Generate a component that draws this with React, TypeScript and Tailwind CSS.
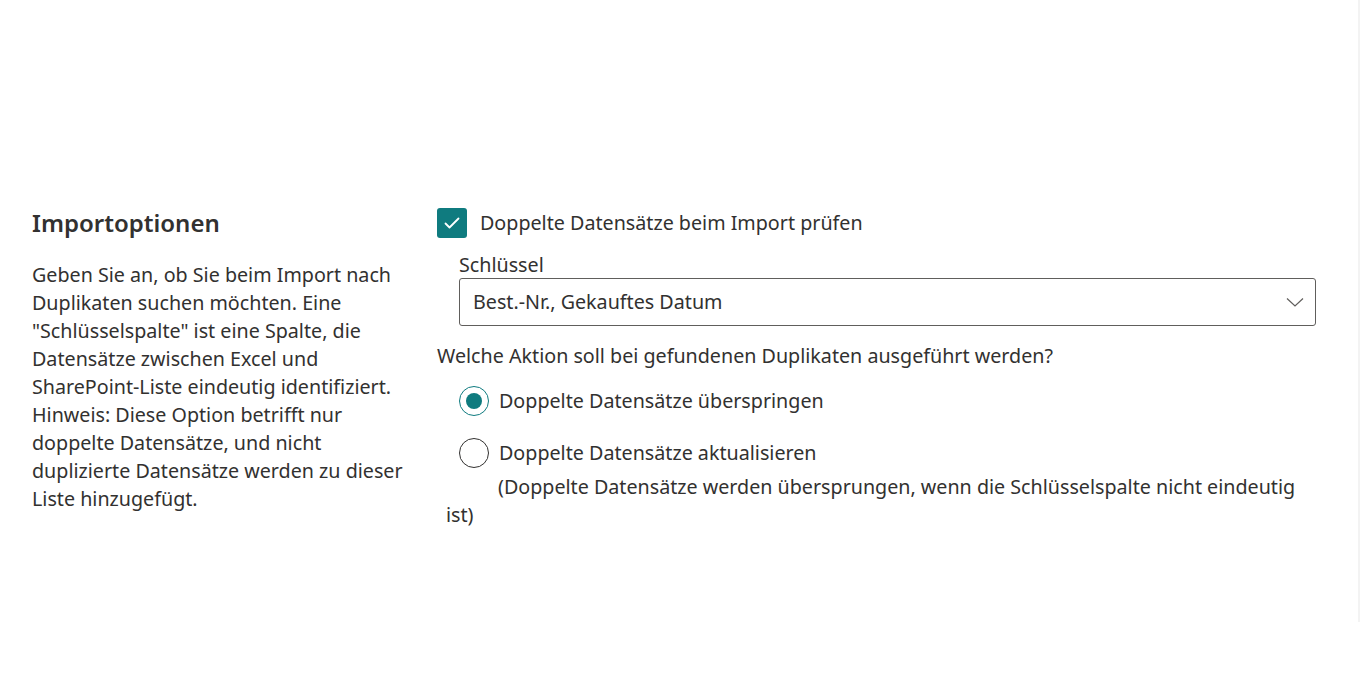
import React from "react";

export default function App() {
  return (
    <div className="relative w-[1360px] h-[700px] bg-white text-[#323130] overflow-hidden" style={{ fontFamily: '"Noto Sans", "Open Sans", sans-serif' }}>
      <div className="absolute right-0 top-0 w-[2px] h-[622px] bg-[#f3f3f3]" />
      <div className="flex pt-[205px] pl-[32px]">
        <div className="w-[375px] shrink-0">
          <h2 className="text-[24px] leading-[36px] font-semibold">Importoptionen</h2>
          <p className="mt-[20px] text-[19.7px] leading-[28px]">
            Geben Sie an, ob Sie beim Import nach Duplikaten suchen möchten. Eine "Schlüsselspalte" ist eine Spalte, die Datensätze zwischen Excel und SharePoint-Liste eindeutig identifiziert. Hinweis: Diese Option betrifft nur doppelte Datensätze, und nicht duplizierte Datensätze werden zu dieser Liste hinzugefügt.
          </p>
        </div>
        <div className="ml-[30px] w-[879px] text-[19.7px]">
          <div className="flex items-center h-[36px]">
            <div className="w-[30px] h-[30px] rounded-[3px] bg-[#0f7b7f] flex items-center justify-center">
              <svg width="20" height="20" viewBox="0 0 20 20" fill="none">
                <path d="M3.5 10.5 L7.5 14.5 L16.5 5.5" stroke="white" strokeWidth="1.8" strokeLinecap="round" strokeLinejoin="round" />
              </svg>
            </div>
            <span className="ml-[13px]">Doppelte Datensätze beim Import prüfen</span>
          </div>
          <div className="ml-[22px] mt-[11px]">
            <div className="leading-[26px]">Schlüssel</div>
            <div className="h-[48px] border border-[#605e5c] rounded-[3px] flex items-center justify-between pl-[13px] pr-[10px]">
              <span>Best.-Nr., Gekauftes Datum</span>
              <svg width="20" height="20" viewBox="0 0 20 20" fill="none">
                <path d="M2 6.5 L10 14 L18 6.5" stroke="#605e5c" strokeWidth="1.2" />
              </svg>
            </div>
          </div>
          <div className="mt-[16px] leading-[28px]">Welche Aktion soll bei gefundenen Duplikaten ausgeführt werden?</div>
          <div className="ml-[22px] mt-[16px] flex items-center">
            <div className="w-[30px] h-[30px] rounded-full border border-[#0f7b7f] flex items-center justify-center">
              <div className="w-[16px] h-[16px] rounded-full bg-[#0f7b7f]" />
            </div>
            <span className="ml-[10px]">Doppelte Datensätze überspringen</span>
          </div>
          <div className="ml-[22px] mt-[22px] flex items-center">
            <div className="w-[30px] h-[30px] rounded-full border border-[#323130]" />
            <span className="ml-[10px]">Doppelte Datensätze aktualisieren</span>
          </div>
          <p className="ml-[9px] mt-[5px] leading-[28px] indent-[52px]">
            (Doppelte Datensätze werden übersprungen, wenn die Schlüsselspalte nicht eindeutig ist)
          </p>
        </div>
      </div>
    </div>
  );
}
